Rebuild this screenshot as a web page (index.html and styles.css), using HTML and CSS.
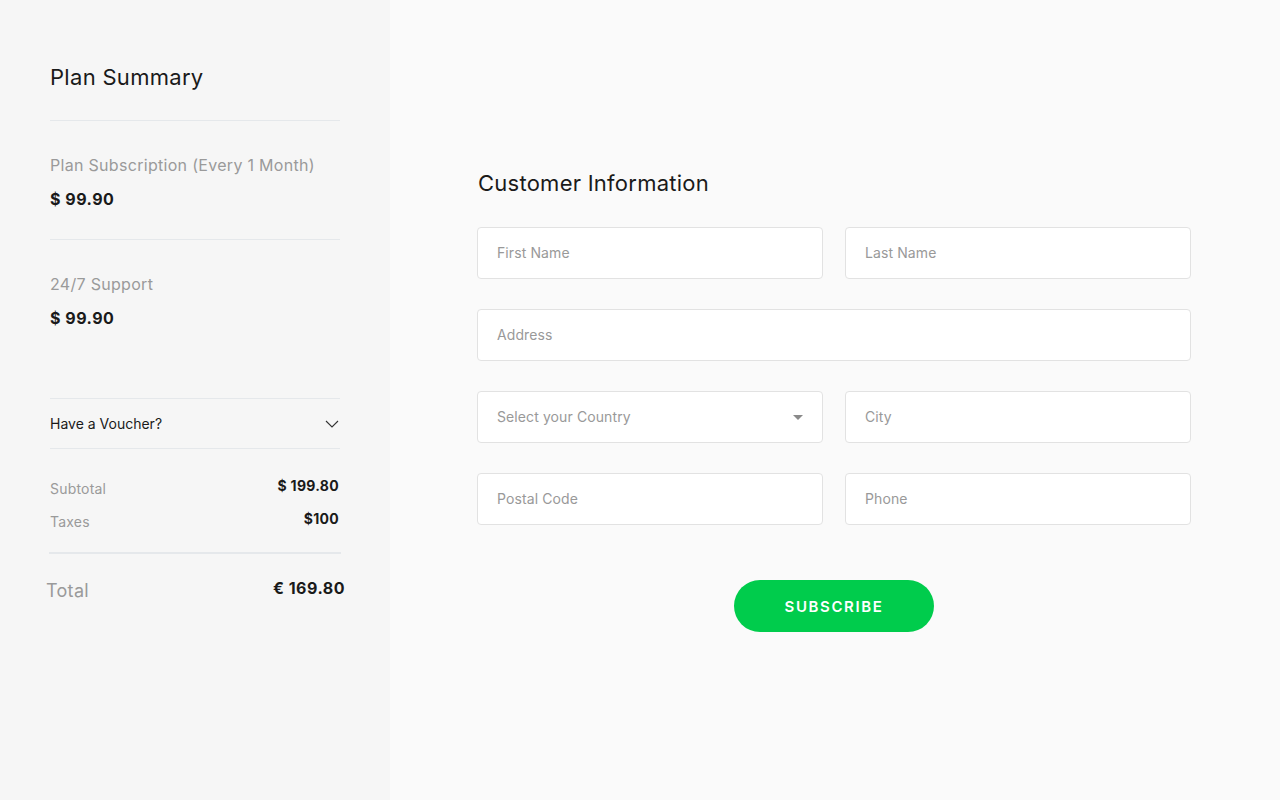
FILE: index.html
```html
<!DOCTYPE html>
<html lang="en">
<head>
<meta charset="utf-8">
<title>Checkout</title>
<link rel="stylesheet" href="styles.css">
</head>
<body>
<div class="page">
  <aside class="summary">
    <h1 class="summary-title">Plan Summary</h1>
    <div class="item">
      <div class="item-label">Plan Subscription (Every 1 Month)</div>
      <div class="item-price">$ 99.90</div>
    </div>
    <div class="item item-last">
      <div class="item-label">24/7 Support</div>
      <div class="item-price">$ 99.90</div>
    </div>
    <div class="voucher">
      <span>Have a Voucher?</span>
      <svg class="chevron" width="14" height="8" viewBox="0 0 14 8"><path d="M1 1 L7 7 L13 1" fill="none" stroke="#333" stroke-width="1.1"/></svg>
    </div>
    <div class="totals">
      <div class="row">
        <span class="row-label">Subtotal</span>
        <span class="row-value">$ 199.80</span>
      </div>
      <div class="row">
        <span class="row-label">Taxes</span>
        <span class="row-value">$100</span>
      </div>
    </div>
    <div class="total">
      <span class="total-label">Total</span>
      <span class="total-value">€ 169.80</span>
    </div>
  </aside>
  <main class="main">
    <div class="form-wrap">
      <h2 class="form-title">Customer Information</h2>
      <form class="form">
        <input class="field" type="text" placeholder="First Name">
        <input class="field" type="text" placeholder="Last Name">
        <input class="field field-wide" type="text" placeholder="Address">
        <div class="field select">
          <span>Select your Country</span>
          <svg class="caret" width="10" height="5" viewBox="0 0 10 5"><path d="M0 0 L10 0 L5 5 Z" fill="#8a8a8a"/></svg>
        </div>
        <input class="field" type="text" placeholder="City">
        <input class="field" type="text" placeholder="Postal Code">
        <input class="field" type="text" placeholder="Phone">
      </form>
      <div class="actions">
        <button class="btn" type="button">SUBSCRIBE</button>
      </div>
    </div>
  </main>
</div>
</body>
</html>
```
FILE: styles.css
```css
* { box-sizing: border-box; }
html, body { margin: 0; padding: 0; }
body {
  font-family: Inter, "Noto Sans", "Liberation Sans", sans-serif;
  color: #1a1a1a;
  background: #fafafa;
}
.page {
  display: flex;
  width: 1280px;
  height: 800px;
}
.summary {
  width: 390px;
  flex: none;
  background: #f6f6f6;
  padding: 63px 50px 0 50px;
}
.summary-title {
  margin: 0 0 29px 0;
  font-size: 22px;
  line-height: 28px;
  font-weight: 400;
  letter-spacing: 0.3px;
  color: #1a1a1a;
}
.item {
  border-top: 1px solid #e5e8eb;
  padding: 34px 0 30px 0;
}
.item-last { padding-bottom: 70px; }
.item-label {
  font-size: 16px;
  line-height: 20px;
  color: #9a9a9a;
  letter-spacing: 0.3px;
}
.item-price {
  margin-top: 14px;
  font-size: 16px;
  line-height: 20px;
  font-weight: 700;
  color: #1a1a1a;
  letter-spacing: 0.5px;
}
.voucher {
  height: 51px;
  border-top: 1px solid #e5e8eb;
  border-bottom: 1px solid #e5e8eb;
  display: flex;
  align-items: center;
  justify-content: space-between;
  font-size: 14px;
  color: #1a1a1a;
}
.chevron { margin-right: 1px; }
.totals {
  padding: 30px 0 20px 0;
  display: flex;
  flex-direction: column;
  gap: 13px;
}
.row {
  display: flex;
  justify-content: space-between;
  align-items: flex-start;
  height: 20px;
}
.row-label {
  font-size: 14px;
  line-height: 20px;
  color: #9a9a9a;
  letter-spacing: 0.2px;
}
.row-value {
  font-size: 14px;
  line-height: 20px;
  font-weight: 700;
  color: #1a1a1a;
  margin-top: -3px;
  margin-right: 1px;
  letter-spacing: 0.3px;
}
.total {
  border-top: 2px solid #e5e8eb;
  margin: 0 -1px;
  padding: 25px 0 0 0;
  display: flex;
  justify-content: space-between;
  align-items: flex-start;
}
.total-label {
  margin-left: -3px;
  font-size: 18px;
  line-height: 24px;
  color: #9a9a9a;
  letter-spacing: 0.3px;
}
.total-value {
  margin-right: -4px;
  margin-top: -3px;
  font-size: 16px;
  line-height: 24px;
  font-weight: 700;
  letter-spacing: 0.5px;
  color: #1a1a1a;
}
.main {
  flex: 1;
  background: #fafafa;
  padding-top: 169px;
  padding-left: 87px;
}
.form-wrap { width: 714px; }
.form-title {
  margin: 0 0 30px 1px;
  font-size: 22px;
  line-height: 28px;
  font-weight: 400;
  letter-spacing: 0.25px;
  color: #1a1a1a;
}
.form {
  display: grid;
  grid-template-columns: 346px 346px;
  column-gap: 22px;
  row-gap: 30px;
}
.field {
  height: 52px;
  width: 100%;
  border: 1px solid #e2e2e2;
  border-radius: 4px;
  background: #fff;
  padding: 0 19px 2px 19px;
  font-family: inherit;
  font-size: 14px;
  letter-spacing: 0.1px;
  color: #1a1a1a;
  outline: none;
}
.field::placeholder { color: #999; }
.field-wide { grid-column: 1 / 3; }
.select {
  display: flex;
  align-items: center;
  justify-content: space-between;
  color: #999;
}
.caret { margin-right: 0; margin-top: 2px; }
.actions {
  display: flex;
  justify-content: center;
  margin-top: 55px;
}
.btn {
  width: 200px;
  height: 52px;
  border: none;
  border-radius: 26px;
  background: #00cc4c;
  color: #fff;
  font-family: inherit;
  font-size: 15px;
  font-weight: 600;
  letter-spacing: 1.6px;
  cursor: pointer;
}
```
